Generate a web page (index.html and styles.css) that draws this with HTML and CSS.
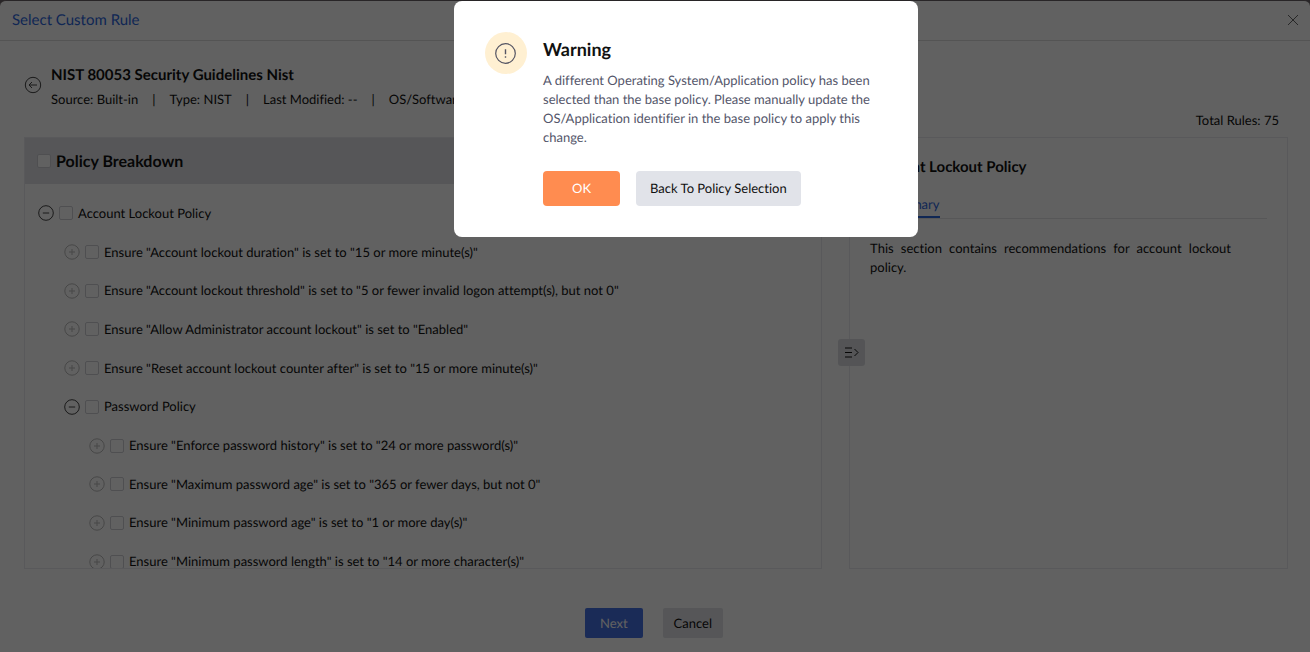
FILE: index.html
```html
<!DOCTYPE html>
<html lang="en">
<head>
    <meta charset="UTF-8">
    <meta name="viewport" content="width=device-width, initial-scale=1.0">
    <title>Select Custom Rule</title>
    <link rel="stylesheet" href="styles.css">
</head>
<body>

<svg class="symbols" aria-hidden="true">
    <symbol id="minus" viewBox="0 0 16 16">
        <circle cx="8" cy="8" r="7.3"/>
        <path d="M4.8 8h6.4"/>
    </symbol>
    <symbol id="plus" viewBox="0 0 16 16">
        <circle cx="8" cy="8" r="7.2"/>
        <path d="M5 8h6M8 5v6"/>
    </symbol>
</svg>

<div class="page">
    <header class="page-header">
        <h1>Select Custom Rule</h1>
        <button class="icon-button" aria-label="Close">
            <svg width="12" height="12" viewBox="0 0 12 12"><path d="M1 1l10 10M11 1L1 11"/></svg>
        </button>
    </header>

    <main class="content">
        <div class="policy-info">
            <button class="icon-button" aria-label="Back">
                <svg width="18" height="18" viewBox="0 0 18 18"><circle cx="9" cy="9" r="7.7"/><path d="M13 9H5M8 6L5 9l3 3"/></svg>
            </button>
            <div>
                <h2>NIST 80053 Security Guidelines Nist</h2>
                <div class="meta">
                    <span>Source: Built-in</span>
                    <span>|</span>
                    <span>Type: NIST</span>
                    <span>|</span>
                    <span>Last Modified: --</span>
                    <span>|</span>
                    <span>OS/Software</span>
                </div>
            </div>
        </div>
        <p class="total">Total Rules: 75</p>

        <div class="panels">
            <section class="panel breakdown">
                <div class="breakdown-header">
                    <input type="checkbox" id="all">
                    <label for="all">Policy Breakdown</label>
                </div>
                <ul class="tree">
                    <li>
                        <button class="expander open" aria-label="Collapse"><svg><use href="#minus"/></svg></button>
                        <input type="checkbox" id="r1"><label for="r1">Account Lockout Policy</label>
                    </li>
                    <li class="level-2">
                        <button class="expander" aria-label="Expand"><svg><use href="#plus"/></svg></button>
                        <input type="checkbox" id="r2"><label for="r2">Ensure "Account lockout duration" is set to "15 or more minute(s)"</label>
                    </li>
                    <li class="level-2">
                        <button class="expander" aria-label="Expand"><svg><use href="#plus"/></svg></button>
                        <input type="checkbox" id="r3"><label for="r3">Ensure "Account lockout threshold" is set to "5 or fewer invalid logon attempt(s), but not 0"</label>
                    </li>
                    <li class="level-2">
                        <button class="expander" aria-label="Expand"><svg><use href="#plus"/></svg></button>
                        <input type="checkbox" id="r4"><label for="r4">Ensure "Allow Administrator account lockout" is set to "Enabled"</label>
                    </li>
                    <li class="level-2">
                        <button class="expander" aria-label="Expand"><svg><use href="#plus"/></svg></button>
                        <input type="checkbox" id="r5"><label for="r5">Ensure "Reset account lockout counter after" is set to "15 or more minute(s)"</label>
                    </li>
                    <li class="level-2">
                        <button class="expander open" aria-label="Collapse"><svg><use href="#minus"/></svg></button>
                        <input type="checkbox" id="r6"><label for="r6">Password Policy</label>
                    </li>
                    <li class="level-3">
                        <button class="expander" aria-label="Expand"><svg><use href="#plus"/></svg></button>
                        <input type="checkbox" id="r7"><label for="r7">Ensure "Enforce password history" is set to "24 or more password(s)"</label>
                    </li>
                    <li class="level-3">
                        <button class="expander" aria-label="Expand"><svg><use href="#plus"/></svg></button>
                        <input type="checkbox" id="r8"><label for="r8">Ensure "Maximum password age" is set to "365 or fewer days, but not 0"</label>
                    </li>
                    <li class="level-3">
                        <button class="expander" aria-label="Expand"><svg><use href="#plus"/></svg></button>
                        <input type="checkbox" id="r9"><label for="r9">Ensure "Minimum password age" is set to "1 or more day(s)"</label>
                    </li>
                    <li class="level-3">
                        <button class="expander" aria-label="Expand"><svg><use href="#plus"/></svg></button>
                        <input type="checkbox" id="r10"><label for="r10">Ensure "Minimum password length" is set to "14 or more character(s)"</label>
                    </li>
                </ul>
            </section>

            <section class="panel details">
                <button class="panel-toggle" aria-label="Hide details">
                    <svg width="14" height="11" viewBox="0 0 14 11"><path d="M0 1h7M0 5.5h7M0 10h7M9.5 2l3.5 3.5L9.5 9"/></svg>
                </button>
                <h2>Account Lockout Policy</h2>
                <nav class="tabs">
                    <a href="#summary">Summary</a>
                </nav>
                <p id="summary">This section contains recommendations for account lockout policy.</p>
            </section>
        </div>
    </main>

    <footer class="page-footer">
        <button class="button next">Next</button>
        <button class="button">Cancel</button>
    </footer>
</div>

<div class="overlay">
    <div class="modal" role="alertdialog" aria-labelledby="warning-title">
        <div class="modal-icon">
            <svg width="22" height="22" viewBox="0 0 22 22"><circle cx="10.5" cy="11.5" r="9.8" stroke-width="1.2"/><path d="M10.5 7.2v5M10.5 14.2v1.6" stroke-width="1.4"/></svg>
        </div>
        <div>
            <h2 id="warning-title">Warning</h2>
            <p>A different Operating System/Application policy has been selected than the base policy. Please manually update the OS/Application identifier in the base policy to apply this change.</p>
            <div class="modal-buttons">
                <button class="modal-button ok">OK</button>
                <button class="modal-button">Back To Policy Selection</button>
            </div>
        </div>
    </div>
</div>

</body>
</html>
```
FILE: styles.css
```css
* {
    box-sizing: border-box;
}
body {
    margin: 0;
    font-family: Lato, sans-serif;
    font-size: 13px;
    line-height: 19px;
    text-rendering: geometricPrecision;
    font-variant-ligatures: none;
    color: #111;
    background-color: #6b6367;
}
h1, h2, p, ul {
    margin: 0;
    padding: 0;
}
h2 {
    font-size: 15px;
    line-height: 20px;
}
button {
    font: inherit;
    text-rendering: inherit;
    color: inherit;
    border: none;
    padding: 0;
    cursor: pointer;
}
svg {
    display: block;
    fill: none;
    stroke: currentColor;
}
.symbols {
    position: absolute;
    width: 0;
    height: 0;
}
input[type="checkbox"] {
    appearance: none;
    flex: none;
    width: 14px;
    height: 14px;
    margin: 0;
    border: 1px solid #cfd0d6;
    border-radius: 2px;
    background-color: #fff;
}
.page {
    display: flex;
    flex-direction: column;
    height: 100vh;
    border-top: 1px solid #6b6367;
    border-radius: 6px 6px 0 0;
    background-color: #fff;
}
.page-header {
    display: flex;
    justify-content: space-between;
    align-items: center;
    height: 40px;
    padding: 0 11px 1px 12px;
    border-bottom: 1px solid #dcdcdc;
}
.page-header h1 {
    font-size: 15px;
    font-weight: 400;
    color: #2c66dd;
}
.icon-button {
    background: none;
    color: #666;
}
.content {
    flex: 1;
    min-height: 0;
    display: flex;
    flex-direction: column;
    padding: 24px 22px 0 24px;
}
.policy-info {
    display: flex;
    align-items: center;
    gap: 9px;
}
.policy-info .icon-button {
    padding-bottom: 4px;
    color: #444;
}
.meta {
    display: flex;
    gap: 14px;
    margin-top: 5px;
}
.total {
    margin: 2px 9px 7px 0;
    text-align: right;
}
.panels {
    flex: 1;
    min-height: 0;
    display: grid;
    grid-template-columns: 20fr 11fr;
    gap: 27px;
}
.panel {
    min-width: 0;
    min-height: 0;
    border: 1px solid #eaeaee;
}
.breakdown {
    overflow: hidden;
}
.breakdown-header {
    display: flex;
    align-items: center;
    gap: 5px;
    height: 46px;
    padding: 0 12px;
    background-color: #e1e3e8;
    font-size: 16px;
    font-weight: 700;
}
.tree {
    display: grid;
    grid-auto-rows: 1fr;
    height: 387px;
    margin-top: 10px;
    list-style: none;
}
.tree li {
    display: flex;
    align-items: center;
    gap: 5px;
    padding-left: 13px;
}
.tree .level-2 {
    padding-left: 39px;
}
.tree .level-3 {
    padding-left: 64px;
}
.expander {
    background: none;
    color: #bbb;
}
.expander.open {
    color: #444;
}
.expander svg {
    width: 16px;
    height: 16px;
}
.details {
    position: relative;
    padding: 19px 20px;
}
.panel-toggle {
    position: absolute;
    top: calc(50% - 14px);
    left: -12px;
    display: grid;
    place-items: center;
    width: 27px;
    height: 27px;
    border-radius: 3px;
    background-color: #dcdee3;
}
.tabs {
    display: flex;
    margin: 18px 0 20px;
    border-bottom: 1px solid #e4e4e8;
}
.tabs a {
    padding: 0 0 2px 16px;
    border-bottom: 2px solid #2c66dd;
    color: #2c66dd;
    text-decoration: none;
}
.details p {
    padding-right: 36px;
    text-align: justify;
}
.page-footer {
    display: flex;
    justify-content: center;
    gap: 20px;
    padding: 39px 2px 14px 0;
}
.button {
    height: 30px;
    padding: 0 11px;
    border-radius: 2px;
    background-color: #e1e3e8;
}
.next {
    padding: 0 15px;
    background-color: #4672e4;
    color: #fff;
}
.overlay {
    position: fixed;
    inset: 0;
    display: flex;
    justify-content: center;
    align-items: flex-start;
    padding: 1px 0 0 62px;
    background-color: rgba(0, 0, 0, 0.62);
}
.modal {
    display: flex;
    gap: 16px;
    width: 464px;
    padding: 31px;
    border-radius: 8px;
    background-color: #fff;
}
.modal-icon {
    flex: none;
    display: grid;
    place-items: center;
    width: 42px;
    height: 42px;
    border-radius: 50%;
    background-color: #fff0d2;
    color: #555563;
}
.modal h2 {
    margin: 7px 0 12px;
    font-size: 18px;
}
.modal p {
    color: #54566a;
}
.modal-buttons {
    display: flex;
    gap: 16px;
    margin-top: 24px;
}
.modal-button {
    height: 35px;
    padding: 0 14px;
    border-radius: 4px;
    background-color: #e1e3e9;
}
.ok {
    padding: 0 29px;
    background-color: #ff8c50;
    color: #fff;
}
```
